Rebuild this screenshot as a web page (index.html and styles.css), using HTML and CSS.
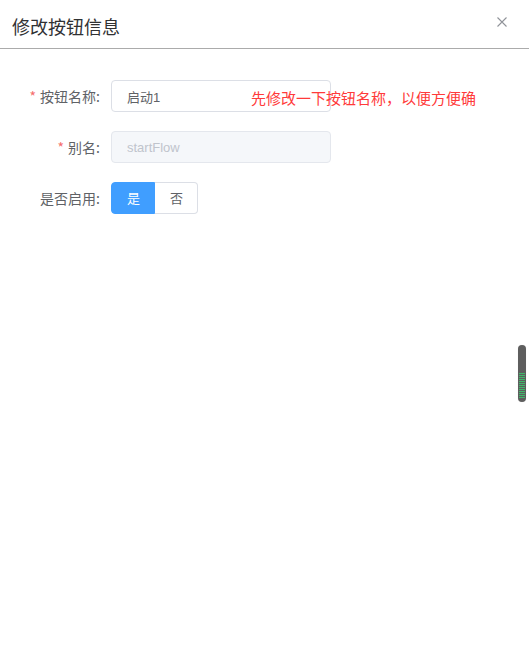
FILE: index.html
```html
<!DOCTYPE html>
<html lang="zh-CN">
<head>
<meta charset="utf-8">
<title>修改按钮信息</title>
<link rel="stylesheet" href="styles.css">
</head>
<body>
<div class="dialog">
  <div class="dialog-header">
    <span class="dialog-title">修改按钮信息</span>
    <button class="dialog-close" type="button" aria-label="关闭">
      <svg viewBox="0 0 10 10" width="10" height="10"><path d="M0.5 0.5L9.5 9.5M9.5 0.5L0.5 9.5" stroke="#909399" stroke-width="1.1" fill="none"/></svg>
    </button>
  </div>
  <form class="form">
    <div class="form-item">
      <label class="form-label is-required">按钮名称:</label>
      <div class="form-content">
        <input class="input" type="text" value="启动1">
      </div>
      <span class="form-tip">先修改一下按钮名称，以便方便确</span>
    </div>
    <div class="form-item">
      <label class="form-label is-required">别名:</label>
      <div class="form-content">
        <input class="input" type="text" value="startFlow" disabled>
      </div>
    </div>
    <div class="form-item">
      <label class="form-label">是否启用:</label>
      <div class="form-content">
        <div class="radio-group">
          <span class="radio-button is-active">是</span>
          <span class="radio-button">否</span>
        </div>
      </div>
    </div>
  </form>
  <div class="scroll-thumb"><div class="scroll-grip"></div></div>
</div>
</body>
</html>
```

FILE: styles.css
```css
html, body {
  margin: 0;
  padding: 0;
  background: #fff;
}

body {
  font-family: "Noto Sans CJK SC", "Liberation Sans", sans-serif;
  color: #606266;
}

.dialog {
  position: relative;
  width: 529px;
  height: 652px;
}

.dialog-header {
  display: flex;
  align-items: center;
  justify-content: space-between;
  height: 24px;
  padding: 14px 22px 10px 12px;
  border-bottom: 1px solid #ababab;
}

.dialog-title {
  font-size: 18px;
  line-height: 24px;
  color: #303133;
}

.dialog-close {
  display: flex;
  padding: 0;
  margin-top: -8px;
  border: 0;
  background: none;
  cursor: pointer;
}

.form {
  padding-top: 31px;
}

.form-item {
  position: relative;
  display: flex;
  margin-bottom: 19px;
}

.form-label {
  box-sizing: border-box;
  width: 111px;
  padding-right: 11px;
  text-align: right;
  font-size: 14px;
  line-height: 32px;
  color: #606266;
}

.form-label.is-required::before {
  content: "*";
  color: #f56c6c;
  margin-right: 4px;
}

.form-content {
  display: flex;
}

.input {
  box-sizing: border-box;
  width: 220px;
  height: 32px;
  padding: 0 15px;
  border: 1px solid #dcdfe6;
  border-radius: 4px;
  font-family: "Liberation Sans", "Noto Sans CJK SC", sans-serif;
  font-size: 13px;
  color: #606266;
  background: #fff;
  outline: none;
}

.input:disabled {
  background: #f5f7fa;
  border-color: #e4e7ed;
  color: #c0c4cc;
}

.form-tip {
  position: absolute;
  left: 251px;
  top: 8px;
  font-size: 15px;
  line-height: 20px;
  color: #ff3a3a;
  white-space: nowrap;
}

.radio-group {
  display: flex;
}

.radio-button {
  box-sizing: border-box;
  height: 32px;
  padding: 0 15px;
  font-size: 13px;
  line-height: 30px;
  border: 1px solid #dcdfe6;
  color: #606266;
  background: #fff;
}

.radio-button:first-child {
  border-radius: 4px 0 0 4px;
  width: 44px;
}

.radio-button:last-child {
  border-left: 0;
  border-radius: 0 4px 4px 0;
  width: 43px;
}

.radio-button.is-active {
  background: #409eff;
  border-color: #409eff;
  color: #fff;
}

.scroll-thumb {
  position: absolute;
  left: 518px;
  top: 345px;
  width: 8px;
  height: 57px;
  border-radius: 4px;
  background: #5e5e5e;
  box-shadow: 0 0 1px rgba(0, 0, 0, 0.15);
}

.scroll-grip {
  position: absolute;
  left: 1px;
  right: 1px;
  top: 28px;
  height: 26px;
  background: repeating-linear-gradient(to bottom, #3fb96a 0, #3fb96a 1px, #5e5e5e 1px, #5e5e5e 2px);
}
```
